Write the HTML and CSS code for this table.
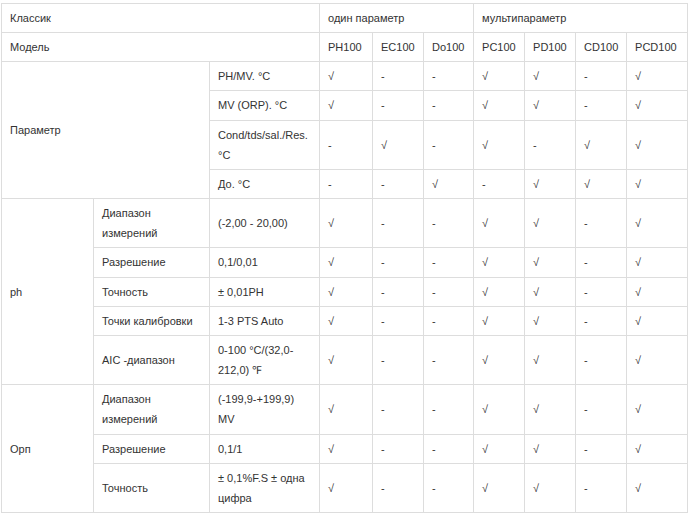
FILE: index.html
```html
<!DOCTYPE html>
<html lang="ru">
<head>
<meta charset="utf-8">
<link rel="stylesheet" href="styles.css">
</head>
<body>
<div class="wrap">
<table class="spec">
<colgroup>
<col class="c1"><col class="c2"><col class="c3">
<col class="m1"><col class="m2"><col class="m3"><col class="m4"><col class="m5"><col class="m6"><col class="m7">
</colgroup>
<tbody>
<tr><td colspan="3">Классик</td><td colspan="3">один параметр</td><td colspan="4">мультипараметр</td></tr>
<tr><td colspan="3">Модель</td><td>PH100</td><td>EC100</td><td>Do100</td><td>PC100</td><td>PD100</td><td>CD100</td><td>PCD100</td></tr>
<tr><td colspan="2" rowspan="4">Параметр</td><td>PH/MV. °C</td><td>√</td><td>-</td><td>-</td><td>√</td><td>√</td><td>-</td><td>√</td></tr>
<tr><td>MV (ORP). °C</td><td>√</td><td>-</td><td>-</td><td>√</td><td>√</td><td>-</td><td>√</td></tr>
<tr><td>Cond/tds/sal./Res. °C</td><td>-</td><td>√</td><td>-</td><td>√</td><td>-</td><td>√</td><td>√</td></tr>
<tr><td>До. °C</td><td>-</td><td>-</td><td>√</td><td>-</td><td>√</td><td>√</td><td>√</td></tr>
<tr><td rowspan="5">ph</td><td>Диапазон измерений</td><td>(-2,00 - 20,00)</td><td>√</td><td>-</td><td>-</td><td>√</td><td>√</td><td>-</td><td>√</td></tr>
<tr><td>Разрешение</td><td>0,1/0,01</td><td>√</td><td>-</td><td>-</td><td>√</td><td>√</td><td>-</td><td>√</td></tr>
<tr><td>Точность</td><td>± 0,01PH</td><td>√</td><td>-</td><td>-</td><td>√</td><td>√</td><td>-</td><td>√</td></tr>
<tr><td>Точки калибровки</td><td>1-3 PTS Auto</td><td>√</td><td>-</td><td>-</td><td>√</td><td>√</td><td>-</td><td>√</td></tr>
<tr><td>AIC -диапазон</td><td>0-100 °C/(32,0-212,0) ℉</td><td>√</td><td>-</td><td>-</td><td>√</td><td>√</td><td>-</td><td>√</td></tr>
<tr><td rowspan="3">Орп</td><td>Диапазон измерений</td><td>(-199,9-+199,9) MV</td><td>√</td><td>-</td><td>-</td><td>√</td><td>√</td><td>-</td><td>√</td></tr>
<tr><td>Разрешение</td><td>0,1/1</td><td>√</td><td>-</td><td>-</td><td>√</td><td>√</td><td>-</td><td>√</td></tr>
<tr><td>Точность</td><td>± 0,1%F.S ± одна цифра</td><td>√</td><td>-</td><td>-</td><td>√</td><td>√</td><td>-</td><td>√</td></tr>
</tbody>
</table>
</div>
</body>
</html>
```

FILE: styles.css
```css
html, body {
  margin: 0;
  padding: 0;
  background: #fff;
}
.wrap {
  padding: 3px 0 0 1px;
}
.spec {
  width: 686px;
  table-layout: fixed;
  border-collapse: collapse;
  font-family: "Liberation Sans", Arial, sans-serif;
  font-size: 11px;
  line-height: 20.15px;
  color: #333;
}
.spec td {
  border: 1px solid #ddd;
  padding: 4px 8px;
  vertical-align: middle;
  text-align: left;
}
.c1 { width: 92px; }
.c2 { width: 116px; }
.c3 { width: 110px; }
.m1 { width: 53px; }
.m2 { width: 51px; }
.m3 { width: 50px; }
.m4 { width: 51px; }
.m5 { width: 51px; }
.m6 { width: 51px; }
.m7 { width: 61px; }
```
